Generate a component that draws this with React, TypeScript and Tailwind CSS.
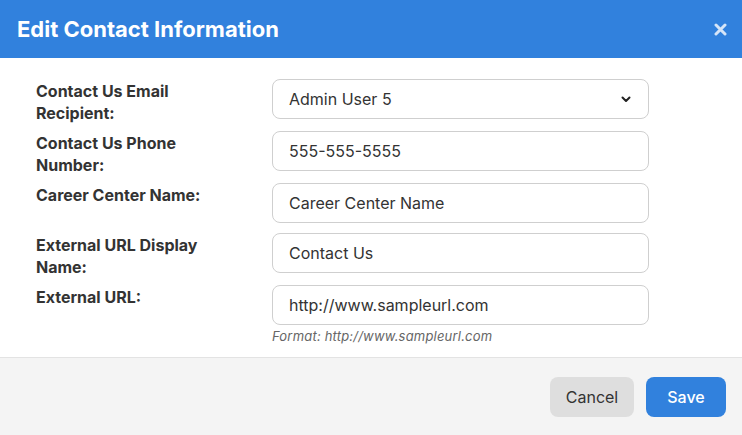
import React from "react";

const font = { fontFamily: "Inter, 'Noto Sans', sans-serif" };

function Row({ label, children, mb = "mb-3" }: { label: React.ReactNode; children: React.ReactNode; mb?: string }) {
  return (
    <div className={`flex h-[40px] ${mb}`}>
      <div className="w-[236px] shrink-0 text-[16px] leading-[22px] font-bold text-[#333] pr-4 pt-[1px]">{label}</div>
      <div className="w-[377px]">{children}</div>
    </div>
  );
}

function Input({ value }: { value: string }) {
  return (
    <div className="h-[40px] w-full rounded-[8px] border border-[#cfcfcf] bg-white px-4 flex items-center text-[16px] text-[#333]">
      {value}
    </div>
  );
}

export default function App() {
  return (
    <div className="w-[742px] h-[435px] bg-white flex flex-col overflow-hidden" style={font}>
      <div className="h-[58px] shrink-0 bg-[#3181dd] flex items-center justify-between pl-[17px] pr-[15px]">
        <div className="text-white text-[22px] font-bold">Edit Contact Information</div>
        <svg width="13" height="13" viewBox="0 0 13 13" className="opacity-80">
          <path d="M2 2 L11 11 M11 2 L2 11" stroke="white" strokeWidth="3" strokeLinecap="round" />
        </svg>
      </div>
      <div className="flex-1 pt-[21px] pl-[36px]">
        <Row label={<>Contact Us Email<br />Recipient:</>}>
          <div className="h-[40px] w-full rounded-[8px] border border-[#cfcfcf] bg-white pl-4 pr-[17px] flex items-center justify-between text-[16px] text-[#333]">
            <span>Admin User 5</span>
            <svg width="10" height="7" viewBox="0 0 10 7">
              <path d="M1.5 1.5 L5 5 L8.5 1.5" fill="none" stroke="#222" strokeWidth="2" strokeLinecap="round" strokeLinejoin="round" />
            </svg>
          </div>
        </Row>
        <Row label={<>Contact Us Phone<br />Number:</>}>
          <Input value="555-555-5555" />
        </Row>
        <Row label="Career Center Name:" mb="mb-[10px]">
          <Input value="Career Center Name" />
        </Row>
        <Row label={<>External URL Display<br />Name:</>}>
          <Input value="Contact Us" />
        </Row>
        <Row label="External URL:" mb="mb-0">
          <div>
            <Input value="http://www.sampleurl.com" />
            <div className="mt-[2px] text-[13px] tracking-[0.2px] italic text-[#666]">Format: http://www.sampleurl.com</div>
          </div>
        </Row>
      </div>
      <div className="h-[78px] shrink-0 border-t border-[#e3e3e3] bg-[#f4f4f4] flex items-center justify-end gap-3 pr-4">
        <button className="h-[40px] w-[84px] rounded-[8px] bg-[#dedede] text-[16px] text-[#333]">Cancel</button>
        <button className="h-[40px] w-[80px] rounded-[8px] bg-[#3181dd] text-[16px] text-white font-medium">Save</button>
      </div>
    </div>
  );
}
